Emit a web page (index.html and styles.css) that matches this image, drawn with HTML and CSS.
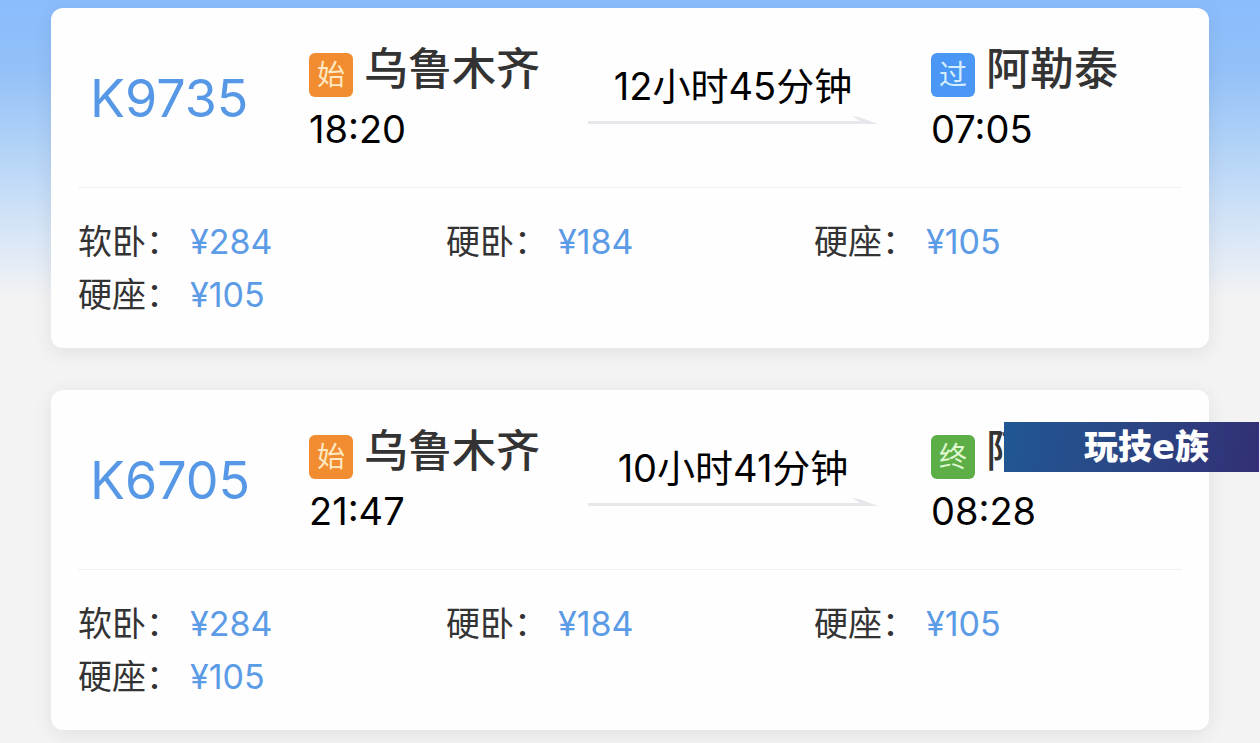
FILE: index.html
```html
<!DOCTYPE html>
<html lang="zh-CN">
<head>
<meta charset="utf-8">
<meta name="viewport" content="width=device-width, initial-scale=1">
<title>乌鲁木齐 - 阿勒泰</title>
<link rel="stylesheet" href="styles.css">
</head>
<body>
<main class="list">
  <article class="card">
    <header class="trip">
      <h2 class="train">K9735</h2>
      <div class="stop">
        <div class="station"><span class="badge badge-start">始</span><span class="city">乌鲁木齐</span></div>
        <time class="time">18:20</time>
      </div>
      <div class="journey">
        <span class="duration">12小时45分钟</span>
        <svg class="arrow" viewBox="0 0 290 11" aria-hidden="true"><path d="M0 7H272L264 2L271 3L290 10H0Z" fill="#e6e7eb"/></svg>
      </div>
      <div class="stop">
        <div class="station"><span class="badge badge-pass">过</span><span class="city">阿勒泰</span></div>
        <time class="time">07:05</time>
      </div>
    </header>
    <dl class="fares">
      <div class="fare"><dt>软卧：</dt><dd>¥284</dd></div>
      <div class="fare"><dt>硬卧：</dt><dd>¥184</dd></div>
      <div class="fare"><dt>硬座：</dt><dd>¥105</dd></div>
      <div class="fare"><dt>硬座：</dt><dd>¥105</dd></div>
    </dl>
  </article>
  <article class="card">
    <header class="trip">
      <h2 class="train">K6705</h2>
      <div class="stop">
        <div class="station"><span class="badge badge-start">始</span><span class="city">乌鲁木齐</span></div>
        <time class="time">21:47</time>
      </div>
      <div class="journey">
        <span class="duration">10小时41分钟</span>
        <svg class="arrow" viewBox="0 0 290 11" aria-hidden="true"><path d="M0 7H272L264 2L271 3L290 10H0Z" fill="#e6e7eb"/></svg>
      </div>
      <div class="stop">
        <div class="station"><span class="badge badge-end">终</span><span class="city">阿勒泰</span></div>
        <time class="time">08:28</time>
      </div>
    </header>
    <dl class="fares">
      <div class="fare"><dt>软卧：</dt><dd>¥284</dd></div>
      <div class="fare"><dt>硬卧：</dt><dd>¥184</dd></div>
      <div class="fare"><dt>硬座：</dt><dd>¥105</dd></div>
      <div class="fare"><dt>硬座：</dt><dd>¥105</dd></div>
    </dl>
    <div class="banner">玩技e族</div>
  </article>
</main>
</body>
</html>
```
FILE: styles.css
```css
* { box-sizing: border-box; }
body {
  margin: 0;
  min-height: 100vh;
  background: #f3f3f4 linear-gradient(#8abcfc 0, #93c1f8 70px, #b3d3f7 150px, #d2e3f7 220px, #f3f3f4 300px) no-repeat;
  font-family: Inter, "Noto Sans CJK SC", sans-serif;
  color: #333;
}
.list {
  display: flex;
  flex-direction: column;
  gap: 42px;
  padding: 8px 51px 13px;
}
.card {
  position: relative;
  padding: 0 27px;
  border-radius: 12px;
  background: #fefefe;
  box-shadow: 0 4px 20px rgba(0, 0, 0, 0.08);
}
.trip {
  display: grid;
  grid-template-columns: 231fr 279fr 343fr 251fr;
  align-items: center;
  height: 180px;
  padding-top: 2px;
  border-bottom: 1px solid #f1f1f3;
}
.train {
  margin: 0;
  padding-left: 12px;
  font-size: 52px;
  font-weight: 400;
  line-height: 64px;
  color: #5698e6;
}
.stop { white-space: nowrap; }
.station {
  display: flex;
  align-items: center;
  gap: 11px;
}
.badge {
  width: 44px;
  height: 44px;
  margin-top: 8px;
  border-radius: 6px;
  font-size: 28px;
  line-height: 44px;
  text-align: center;
}
.badge-start { background: #f18d30; color: #ffe9c4; }
.badge-pass { background: #4b97f5; color: #d5eeff; }
.badge-end { background: #5dae47; color: #dff8d0; }
.city {
  padding-bottom: 4px;
  font-size: 44px;
  font-weight: 500;
  line-height: 56px;
}
.time {
  display: block;
  font-size: 38px;
  line-height: 56px;
  color: #000;
}
.journey {
  display: flex;
  flex-direction: column;
  align-items: center;
  padding: 0 53px 14px 0;
  white-space: nowrap;
  color: #000;
}
.duration {
  font-size: 38px;
  line-height: 56px;
}
.arrow {
  width: 100%;
}
.fares {
  display: grid;
  grid-template-columns: repeat(3, 1fr);
  margin: 0;
  padding: 27px 0;
}
.fare {
  display: flex;
  font-size: 34px;
  line-height: 53px;
}
.fare dt { width: 112px; white-space: nowrap; }
.fare dd { margin: 0; color: #5c9be6; }
.banner {
  position: absolute;
  top: 32px;
  right: -50px;
  width: 255px;
  padding-right: 50px;
  background: linear-gradient(100deg, #205794, #2b4684 50%, #322f76);
  font-family: "DejaVu Sans", "Noto Sans CJK SC", sans-serif;
  font-size: 34px;
  font-weight: 900;
  line-height: 50px;
  text-align: right;
  color: #fff;
}
```
